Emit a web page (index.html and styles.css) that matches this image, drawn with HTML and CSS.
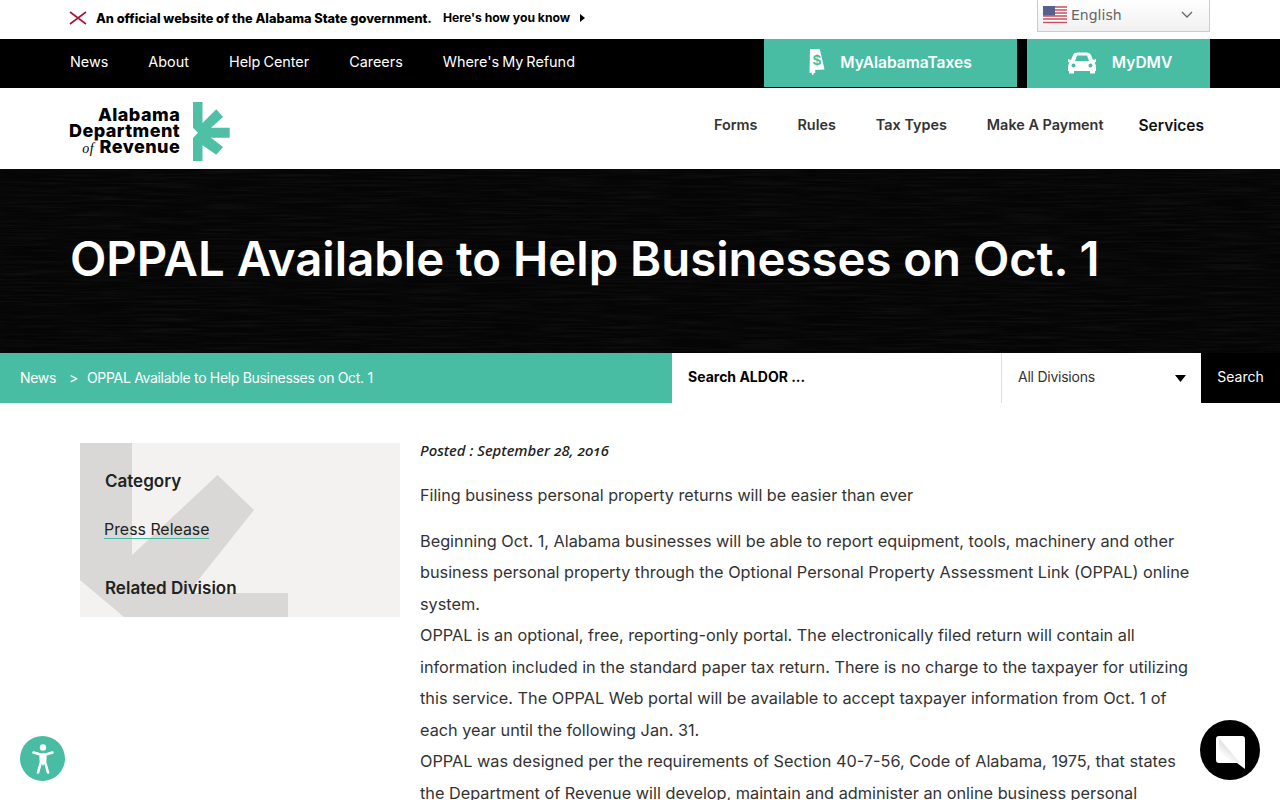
FILE: index.html
```html
<!DOCTYPE html>
<html lang="en">
<head>
<meta charset="utf-8">
<title>OPPAL Available to Help Businesses on Oct. 1</title>
<link rel="stylesheet" href="styles.css">
</head>
<body>
<div class="official">
  <div class="official-msg">
    <svg class="flag-x" width="18" height="14" viewBox="0 0 18 14"><path d="M1 1l16 12M17 1L1 13" stroke="#a5173a" stroke-width="1.600" fill="none"/></svg>
    <strong>An official website of the Alabama State government.</strong>
    <span class="know">Here's how you know</span>
    <svg width="6" height="8" viewBox="0 0 6 8" class="know-arrow"><path d="M0 0l5 4-5 4z" fill="#000"/></svg>
  </div>
  <div class="lang">
    <svg width="24" height="18" viewBox="0 0 24 18" class="us"><rect width="24" height="18" fill="#fff"/><path d="M0 1h24M0 4h24M0 7h24M0 10h24M0 13h24M0 16.500h24" stroke="#c8505f" stroke-width="1.400"/><rect width="12" height="9.500" fill="#55608f"/></svg>
    <span>English</span>
    <svg width="12" height="7" viewBox="0 0 12 7" class="chev"><path d="M1 1l5 5 5-5" fill="none" stroke="#666" stroke-width="1.300"/></svg>
  </div>
</div>
<div class="blackbar">
  <nav class="topnav">
    <a>News</a><a>About</a><a>Help Center</a><a>Careers</a><a>Where's My Refund</a>
  </nav>
  <div class="cta">
    <a class="cta-btn cta-tax">
      <svg width="18" height="26" viewBox="0 0 18 26"><path d="M2 0h9.500l1 3 4 17.500-9.500.5 .5 2.500-1.500 .5-.5 1.500-1.500 .5-.5-2.500-2 .5z" fill="#fff"/><text x="9" y="16" text-anchor="middle" class="dollar">$</text></svg>
      <span>MyAlabamaTaxes</span>
    </a>
    <a class="cta-btn cta-dmv">
      <svg width="30" height="24" viewBox="0 0 30 24"><path d="M6 4Q7 1.500 10 1.500h10Q23 1.500 24 4l2 5 3-1v3l-1.500.5Q29 14 29 16v4h-1v2.500h-5V20H7v2.500H2V20H1v-4q0-2 1.500-4.500L1 11V8l3 1z" fill="#fff"/><path d="M8 10l2-5.500h10l2 5.500z" fill="#48bda4"/><circle cx="6.500" cy="14.500" r="2" fill="#48bda4"/><circle cx="23.500" cy="14.500" r="2" fill="#48bda4"/></svg>
      <span>MyDMV</span>
    </a>
  </div>
</div>
<header class="mainhead">
  <a class="logo">
    <div class="logo-text">
      <div>Alabama</div>
      <div>Department</div>
      <div><em>of</em> Revenue</div>
    </div>
    <svg width="37" height="60" viewBox="0 0 37 60" class="logo-mark"><path fill="#4fc0a6" d="M0 0h9.500v21L23.300 7.300 30 15 18 25.700h18.700v10H18L30 45l-6.700 7.700L9.500 43.300V59H0V36l5-5.300L0 25.700z"/></svg>
  </a>
  <nav class="mainnav">
    <a>Forms</a><a>Rules</a><a>Tax Types</a><a>Make A Payment</a><a class="services">Services</a>
  </nav>
</header>
<section class="hero">
  <h1>OPPAL Available to Help Businesses on Oct. 1</h1>
</section>
<div class="crumbbar">
  <div class="crumbs"><a>News</a><span class="sep">&gt;</span><span>OPPAL Available to Help Businesses on Oct. 1</span></div>
  <div class="search">
    <div class="search-input">Search ALDOR ...</div>
    <div class="search-select"><span>All Divisions</span><svg width="11" height="7" viewBox="0 0 11 7"><path d="M0 0h11L5.500 7z" fill="#000"/></svg></div>
    <div class="search-btn">Search</div>
  </div>
</div>
<main class="content">
  <aside class="side">
    <svg class="side-bg" width="320" height="174" viewBox="0 0 320 174"><path fill="#d9d8d6" d="M0 0h52v112l85.500-80L174 67l-66 83h100v24H44L0 137z"/></svg>
    <h3>Category</h3>
    <a class="side-link">Press Release</a>
    <h3 class="second">Related Division</h3>
  </aside>
  <article class="article">
    <p class="posted">Posted : September 28, 2016</p>
    <p class="lead">Filing business personal property returns will be easier than ever</p>
    <p>Beginning Oct. 1, Alabama businesses will be able to report equipment, tools, machinery and other business personal property through the Optional Personal Property Assessment Link (OPPAL) online system.<br>
    OPPAL is an optional, free, reporting-only portal. The electronically filed return will contain all information included in the standard paper tax return. There is no charge to the taxpayer for utilizing this service. The OPPAL Web portal will be available to accept taxpayer information from Oct. 1 of each year until the following Jan. 31.<br>
    OPPAL was designed per the requirements of Section 40-7-56, Code of Alabama, 1975, that states the Department of Revenue will develop, maintain and administer an online business personal property return system.</p>
  </article>
</main>
<a class="a11y"><svg width="22" height="30" viewBox="0 0 22 30"><circle cx="11" cy="3.500" r="3.200" fill="#fff"/><path d="M1.500 8.500L8.500 10.500H13.500L20.500 8.500M8.500 10.500L9 18L6 28.500M13.500 10.500L13 18L16 28.500" fill="none" stroke="#fff" stroke-width="2.600" stroke-linecap="round" stroke-linejoin="round"/><path d="M8.500 10.500h5L13 18l-2 4-2-4z" fill="#fff"/></svg></a>
<a class="chat"><svg width="30" height="34" viewBox="0 0 30 34"><defs><linearGradient id="chatshade" x1="0.500" y1="0.500" x2="0.300" y2="0.800"><stop offset="0" stop-color="#e6e6e6"/><stop offset="1" stop-color="#fff"/></linearGradient></defs><path d="M3 0h23q3 0 3 3v30l-8-6H3q-3 0-3-3V3q0-3 3-3z" fill="#fff"/><path d="M3 2L24 27H14L3 14z" fill="url(#chatshade)"/></svg></a>
</body>
</html>
```
FILE: styles.css
```css
* { box-sizing: border-box; }
html, body { margin: 0; padding: 0; }
body { font-family: Inter, "Liberation Sans", sans-serif; color: #222; background: #fff; height: 800px; overflow: hidden; position: relative; }
a { color: inherit; text-decoration: none; }

.official { height: 39px; padding: 0 70px; display: flex; justify-content: space-between; position: relative; }
.official-msg { display: flex; align-items: center; height: 36px; color: #000; margin-left: -1px; }
.official-msg strong { margin-left: 9px; font-weight: 800; font-size: 12.750px; }
.know { margin-left: 11px; font-weight: 700; font-size: 12.200px; margin-top: -1px; }
.know-arrow { margin-left: 10px; }
.lang { position: absolute; left: 1037px; top: -1px; width: 173px; height: 33px; border: 1px solid #ccc; background: linear-gradient(#fff, #f0f0f0); display: flex; align-items: center; padding: 0 16px 2px 5px; font-family: "DejaVu Sans", sans-serif; font-size: 14px; color: #666; }
.lang .us { margin-right: 4px; }
.lang .chev { margin-left: auto; }

.blackbar { height: 49px; background: #000; display: flex; justify-content: space-between; padding: 0 70px; }
.topnav { display: flex; align-items: center; gap: 40px; color: #fff; font-size: 14.400px; word-spacing: -1px; padding-bottom: 4px; }
.cta { display: flex; gap: 10px; }
.cta-btn { background: #48bda4; color: #fff; font-weight: 600; font-size: 15.500px; display: flex; align-items: center; justify-content: center; padding-bottom: 2px; }
.cta-tax { width: 253px; height: 48px; gap: 14px; padding-right: 1px; }
.cta-dmv { width: 183px; height: 49px; gap: 15px; padding-left: 2px; }
.dollar { font-family: "Liberation Sans", sans-serif; font-size: 15px; font-weight: 700; fill: #48bda4; }

.mainhead { height: 81px; display: flex; justify-content: space-between; padding: 0 76px 0 69px; }
.logo { display: flex; align-items: flex-start; gap: 13px; padding-top: 14px; }
.logo-text { text-align: right; font-weight: 800; font-size: 18px; line-height: 16px; color: #000; padding-top: 5px; letter-spacing: .45px; }
.logo-text em { font-family: "Liberation Serif", serif; font-weight: 400; font-size: 14px; margin-right: 1px; }
.logo-mark { display: block; }
.mainnav { display: flex; align-items: center; gap: 40px; font-size: 14.400px; font-weight: 600; color: #333; padding-bottom: 8px; }
.mainnav .services { margin-left: -5px; color: #111; font-size: 15.500px; padding-top: 2px; }

.hero { height: 184px; background-color: #050505; background-image: url("data:image/svg+xml,%3Csvg xmlns='http://www.w3.org/2000/svg' width='1280' height='184'%3E%3Cfilter id='n'%3E%3CfeTurbulence type='fractalNoise' baseFrequency='.015 .5' numOctaves='3' seed='4'/%3E%3CfeColorMatrix values='0 0 0 0 1 0 0 0 0 1 0 0 0 0 1 .09 0 0 0 -.036'/%3E%3C/filter%3E%3Crect width='1280' height='184' filter='url(%23n)'/%3E%3C/svg%3E"); padding: 0 70px; display: flex; align-items: center; }
.hero h1 { margin: 0 0 4px; color: #fff; font-size: 47.300px; font-weight: 600; line-height: 1.2; letter-spacing: 0; white-space: nowrap; }

.crumbbar { height: 50px; display: flex; background: #48bda4; }
.crumbs { width: 672px; padding: 0 20px 2px; display: flex; align-items: center; color: #fff; font-size: 14px; letter-spacing: -.32px; }
.crumbs .sep { margin: 0 9px 0 13px; }
.search { flex: 1; display: flex; background: #fff; }
.search-input { width: 330px; padding: 0 0 3px 16px; display: flex; align-items: center; font-size: 14px; font-weight: 700; color: #000; border-right: 1px solid #ddd; }
.search-select { width: 199px; padding: 0 15px 0 16px; display: flex; align-items: center; justify-content: space-between; font-size: 14px; letter-spacing: -.24px; color: #333; }
.search-select span { padding-bottom: 3px; }
.search-btn { flex: 1; background: #000; color: #fff; font-size: 14px; display: flex; align-items: center; justify-content: center; padding-bottom: 3px; }

.content { display: flex; padding: 40px 80px 0; gap: 20px; }
.side { width: 320px; height: 174px; background: #f3f2f0; position: relative; overflow: hidden; padding: 26px 25px 0; flex: none; }
.side-bg { position: absolute; left: 0; top: 0; }
.side h3 { position: relative; margin: 0; font-size: 17px; font-weight: 600; line-height: 24px; color: #222; }
.side h3.second { margin-top: 37.500px; }
.side-link { position: relative; display: inline-block; margin: 27.500px 0 0 -1px; font-size: 15.900px; line-height: 17px; border-bottom: 1px solid #48bda4; color: #222; }
.article { width: 780px; font-size: 16.280px; line-height: 31.500px; color: #333; }
.article p { margin: 0 0 14px; }
.article .posted { font-family: "Noto Sans", sans-serif; font-style: italic; font-weight: 500; font-size: 14.950px; font-variant-numeric: oldstyle-nums; line-height: 16px; margin: -1px 0 22px; color: #222; }
.article .lead { margin-bottom: 14.200px; font-size: 16.150px; }

.a11y { position: absolute; left: 20px; top: 736px; width: 45px; height: 45px; border-radius: 50%; background: #48bda4; display: flex; align-items: center; justify-content: center; }
.chat { position: absolute; left: 1200px; top: 720px; width: 60px; height: 60px; border-radius: 50%; background: #000; display: flex; align-items: center; justify-content: center; padding: 6px 0 0 1px; }
```
